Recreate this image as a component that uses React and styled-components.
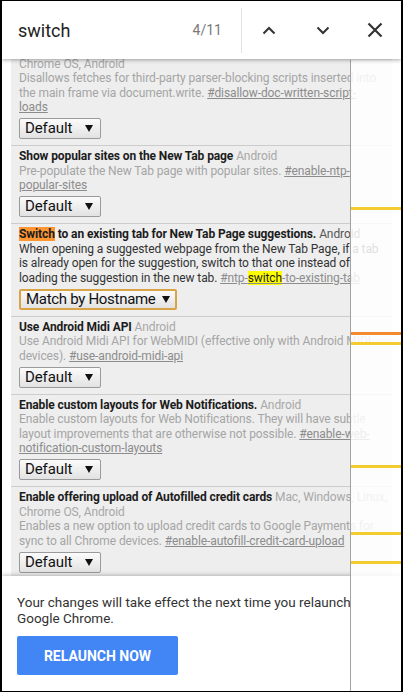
import React from "react";
import styled, { createGlobalStyle } from "styled-components";

const GlobalStyle = createGlobalStyle`
  html, body {
    margin: 0;
    padding: 0;
    background: #fff;
  }
  body {
    font-family: Roboto, "Noto Sans", Arial, sans-serif;
  }
`;

const Frame = styled.div`
  position: relative;
  width: 403px;
  height: 692px;
  box-sizing: border-box;
  border: 1px solid #000;
  border-left-width: 2px;
  border-right-width: 2px;
  display: flex;
  flex-direction: column;
  overflow: hidden;
  background: #fff;
`;

const FindBar = styled.div`
  position: relative;
  z-index: 4;
  flex-shrink: 0;
  height: 58px;
  display: flex;
  align-items: center;
  background: #fff;
  box-shadow: 0 1px 4px rgba(0, 0, 0, 0.35);
`;

const Query = styled.div`
  flex: 1;
  padding-left: 16px;
  font-size: 18px;
  color: #222;
`;

const Count = styled.div`
  margin-right: 19px;
  font-size: 14px;
  color: #7a7a7a;
`;

const Divider = styled.div`
  width: 1px;
  height: 45px;
  background: #e2e2e2;
`;

const BarButton = styled.div`
  width: ${(p) => p.$width}px;
  height: 58px;
  display: flex;
  align-items: center;
  justify-content: center;
  color: #333;
`;

const Viewport = styled.div`
  flex: 1;
  min-height: 0;
  overflow: hidden;
  padding: 0 9px;
`;

const FlagList = styled.div`
  margin-top: -20px;
`;

const Card = styled.div`
  background: #eeeeee;
  border-bottom: 1px solid #cccccc;
  padding: 3px 8px 6px;
  font-size: 12px;
  letter-spacing: -0.1px;
  line-height: 14.5px;
  white-space: nowrap;
  overflow: hidden;
`;

const Title = styled.span`
  font-weight: 700;
  color: #1c1c1c;
`;

const Platforms = styled.span`
  color: ${(p) => (p.$active ? "#555" : "#a8a8a8")};
`;

const Description = styled.div`
  color: ${(p) => (p.$active ? "#333" : "#a5a5a5")};
`;

const FlagLink = styled.span`
  color: #8c8c8c;
  text-decoration: underline;
`;

const Match = styled.span`
  background: ${(p) => (p.$current ? "#ff9632" : "#ffff00")};
  color: #1c1c1c;
`;

const Select = styled.div`
  margin-top: 3.5px;
  width: ${(p) => p.$width}px;
  height: 21px;
  box-sizing: border-box;
  display: flex;
  align-items: center;
  justify-content: space-between;
  gap: 5px;
  padding: 0 ${(p) => (p.$focused ? 5 : 7)}px 0 5px;
  border: ${(p) => (p.$focused ? "2px solid #d9a447" : "1px solid #9a9a9a")};
  border-radius: 2px;
  background: linear-gradient(#fbfbfb, #e2e2e2);
  font-size: 15px;
  letter-spacing: ${(p) => (p.$focused ? -0.3 : -0.1)}px;
  line-height: 1;
  color: #111;

  svg {
    flex-shrink: 0;
  }
`;

const Footer = styled.div`
  position: relative;
  z-index: 2;
  flex-shrink: 0;
  height: 115px;
  box-sizing: border-box;
  padding: 18px 15px 0;
  background: #fff;
  box-shadow: 0 -1px 4px rgba(0, 0, 0, 0.25);
`;

const Notice = styled.div`
  font-size: 13.5px;
  line-height: 16px;
  color: #333;
`;

const RelaunchButton = styled.div`
  margin-top: 10px;
  width: 161px;
  height: 39px;
  display: flex;
  align-items: center;
  justify-content: center;
  border-radius: 2px;
  background: #4285f4;
  color: #fff;
  font-size: 14px;
  font-weight: 700;
`;

const TickBar = styled.div`
  position: absolute;
  z-index: 3;
  top: 59px;
  bottom: 0;
  left: 348px;
  right: 0;
  border-left: 1px solid #a2a2a2;
  background: rgba(255, 255, 255, 0.84);
`;

const Tick = styled.div`
  position: absolute;
  left: 0;
  right: 0;
  height: 3px;
  background: ${(p) => (p.$current ? "#f28a30" : "#f3cc30")};
`;

const ChevronUp = () => (
  <svg width="14" height="9" viewBox="0 0 14 9">
    <path d="M1.5 7.5 L7 2 L12.5 7.5" fill="none" stroke="currentColor" strokeWidth="2" />
  </svg>
);

const ChevronDown = () => (
  <svg width="14" height="9" viewBox="0 0 14 9">
    <path d="M1.5 1.5 L7 7 L12.5 1.5" fill="none" stroke="currentColor" strokeWidth="2" />
  </svg>
);

const CloseIcon = () => (
  <svg width="16" height="16" viewBox="0 0 16 16">
    <path d="M1.5 1.5 L14.5 14.5 M14.5 1.5 L1.5 14.5" fill="none" stroke="currentColor" strokeWidth="2.2" />
  </svg>
);

const Arrow = () => (
  <svg width="8" height="7" viewBox="0 0 8 7">
    <path d="M0 0 H8 L4 7 Z" fill="#111" />
  </svg>
);

const ticks = [
  { top: 147 },
  { top: 272, current: true },
  { top: 282 },
  { top: 405 },
  { top: 472 },
  { top: 501 },
];

const br = <br />;

const App = () => {
  return (
    <>
      <GlobalStyle />
      <Frame>
        <FindBar>
          <Query>switch</Query>
          <Count>4/11</Count>
          <Divider />
          <BarButton $width={54}>
            <ChevronUp />
          </BarButton>
          <BarButton $width={53}>
            <ChevronDown />
          </BarButton>
          <BarButton $width={52}>
            <CloseIcon />
          </BarButton>
        </FindBar>

        <Viewport>
          <FlagList>
            <Card>
              <Title>Disallow fetches for document.written scripts</Title>{" "}
              <Platforms>
                Mac, Windows, Linux,
                {br}
                Chrome OS, Android
              </Platforms>
              <Description>
                Disallows fetches for third-party parser-blocking scripts inserted into
                {br}
                the main frame via document.write.{" "}
                <FlagLink>
                  #disallow-doc-written-script-
                  {br}
                  loads
                </FlagLink>
              </Description>
              <Select $width={82}>
                Default <Arrow />
              </Select>
            </Card>

            <Card>
              <Title>Show popular sites on the New Tab page</Title>{" "}
              <Platforms>Android</Platforms>
              <Description>
                Pre-populate the New Tab page with popular sites.{" "}
                <FlagLink>
                  #enable-ntp-
                  {br}
                  popular-sites
                </FlagLink>
              </Description>
              <Select $width={82}>
                Default <Arrow />
              </Select>
            </Card>

            <Card>
              <Title>
                <Match $current>Switch</Match> to an existing tab for New Tab Page suggestions.
              </Title>{" "}
              <Platforms $active>Android</Platforms>
              <Description $active>
                When opening a suggested webpage from the New Tab Page, if a tab
                {br}
                is already open for the suggestion, switch to that one instead of
                {br}
                loading the suggestion in the new tab.{" "}
                <FlagLink>
                  #ntp-<Match>switch</Match>-to-existing-tab
                </FlagLink>
              </Description>
              <Select $width={158} $focused>
                Match by Hostname <Arrow />
              </Select>
            </Card>

            <Card>
              <Title>Use Android Midi API</Title> <Platforms>Android</Platforms>
              <Description>
                Use Android Midi API for WebMIDI (effective only with Android MIDI
                {br}
                devices). <FlagLink>#use-android-midi-api</FlagLink>
              </Description>
              <Select $width={82}>
                Default <Arrow />
              </Select>
            </Card>

            <Card>
              <Title>Enable custom layouts for Web Notifications.</Title>{" "}
              <Platforms>Android</Platforms>
              <Description>
                Enable custom layouts for Web Notifications. They will have subtle
                {br}
                layout improvements that are otherwise not possible.{" "}
                <FlagLink>
                  #enable-web-
                  {br}
                  notification-custom-layouts
                </FlagLink>
              </Description>
              <Select $width={82}>
                Default <Arrow />
              </Select>
            </Card>

            <Card>
              <Title>Enable offering upload of Autofilled credit cards</Title>{" "}
              <Platforms>
                Mac, Windows, Linux,
                {br}
                Chrome OS, Android
              </Platforms>
              <Description>
                Enables a new option to upload credit cards to Google Payments for
                {br}
                sync to all Chrome devices.{" "}
                <FlagLink>#enable-autofill-credit-card-upload</FlagLink>
              </Description>
              <Select $width={82}>
                Default <Arrow />
              </Select>
            </Card>
          </FlagList>
        </Viewport>

        <Footer>
          <Notice>
            Your changes will take effect the next time you relaunch
            <br />
            Google Chrome.
          </Notice>
          <RelaunchButton>RELAUNCH NOW</RelaunchButton>
        </Footer>

        <TickBar>
          {ticks.map((t, i) => (
            <Tick key={i} $current={t.current} style={{ top: t.top }} />
          ))}
        </TickBar>
      </Frame>
    </>
  );
};

export default App;
